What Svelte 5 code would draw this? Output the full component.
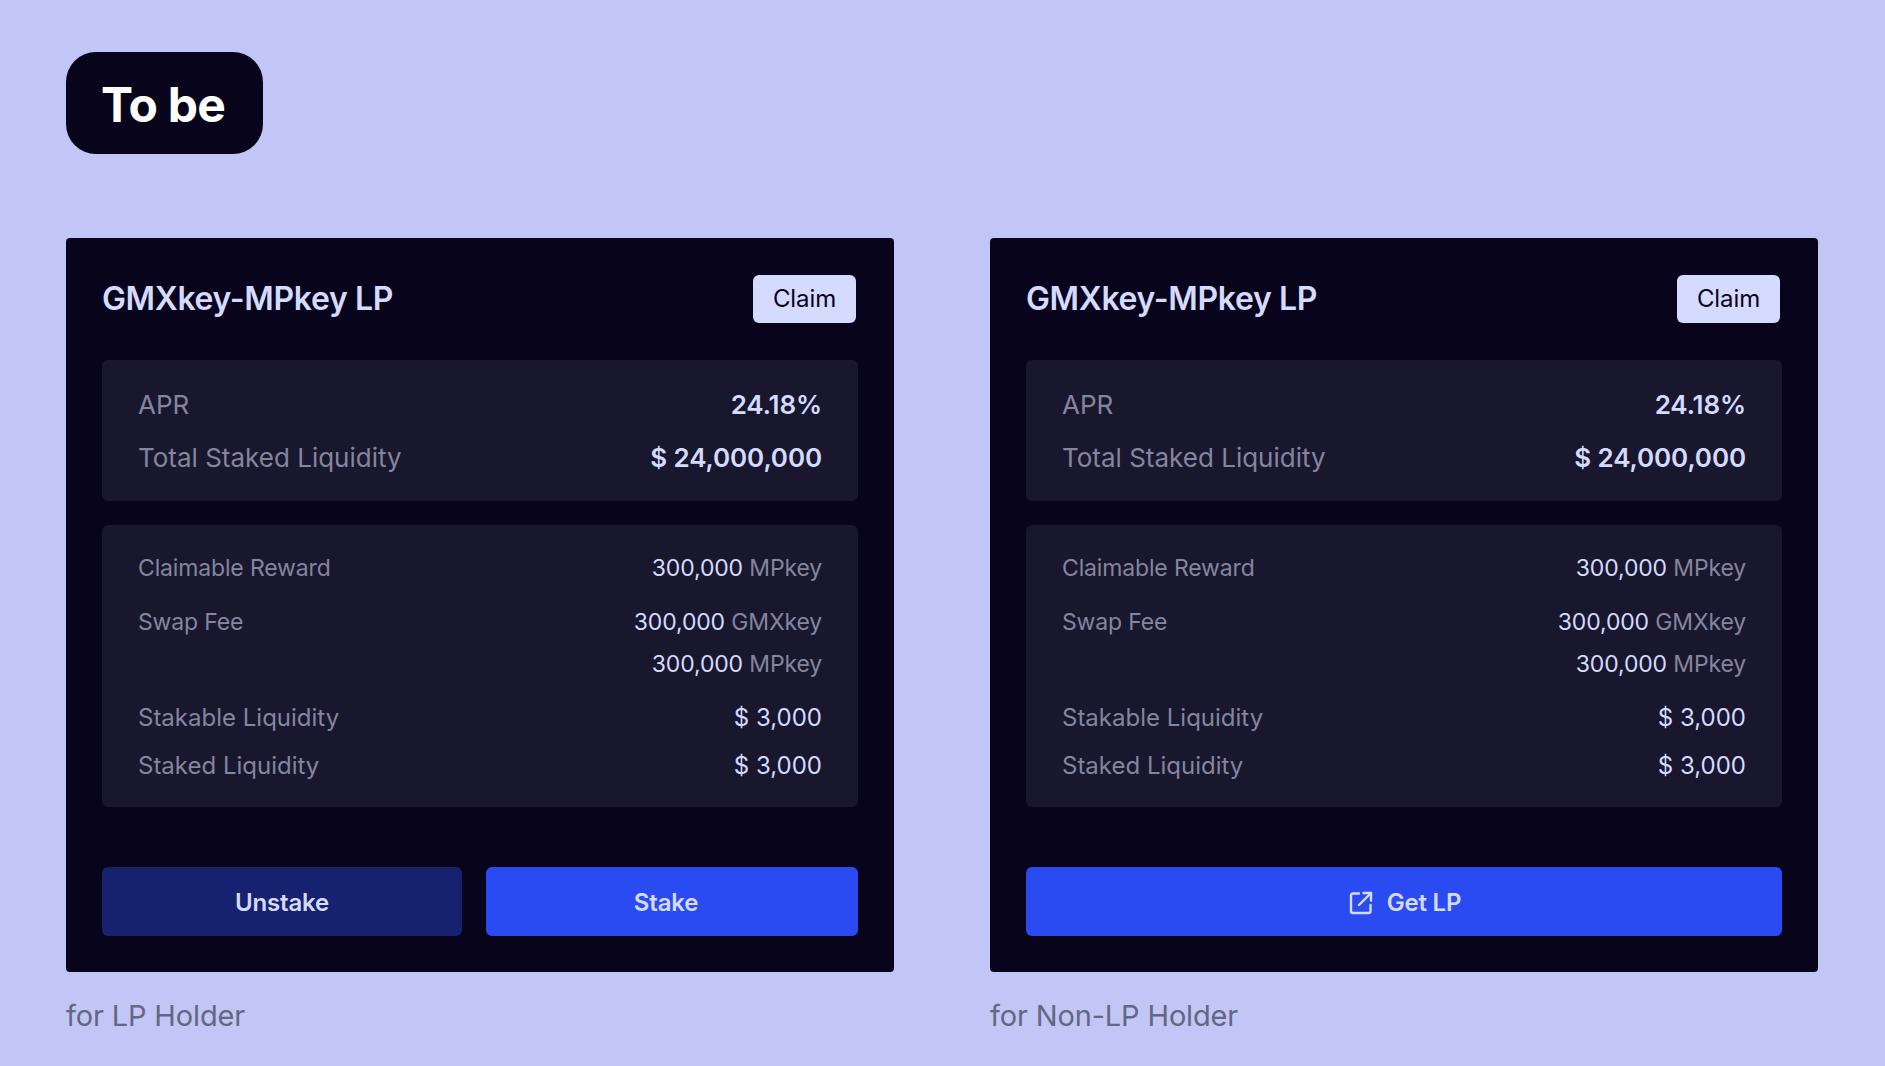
<script>
  const cards = [
    { caption: "for LP Holder", holder: true },
    { caption: "for Non-LP Holder", holder: false },
  ];
</script>

<div class="page">
  <div class="tag">To be</div>

  <div class="cards">
    {#each cards as card}
      <div class="column">
        <div class="card">
          <div class="card-head">
            <h2>GMXkey-MPkey LP</h2>
            <button class="claim">Claim</button>
          </div>

          <div class="box summary">
            <div class="row">
              <span>APR</span>
              <span class="value">24.18%</span>
            </div>
            <div class="row">
              <span>Total Staked Liquidity</span>
              <span class="value">$ 24,000,000</span>
            </div>
          </div>

          <div class="box details">
            <div class="row small">
              <span>Claimable Reward</span>
              <span class="value">300,000 <em>MPkey</em></span>
            </div>
            <div class="row small swap">
              <span>Swap Fee</span>
              <div class="lines">
                <span class="value">300,000 <em>GMXkey</em></span>
                <span class="value">300,000 <em>MPkey</em></span>
              </div>
            </div>
            <div class="row">
              <span>Stakable Liquidity</span>
              <span class="value">$ 3,000</span>
            </div>
            <div class="row">
              <span>Staked Liquidity</span>
              <span class="value">$ 3,000</span>
            </div>
          </div>

          <div class="actions">
            {#if card.holder}
              <button class="action dark">Unstake</button>
              <button class="action stake">Stake</button>
            {:else}
              <button class="action">
                <svg width="28" height="28" viewBox="0 0 28 28" fill="none" stroke="currentColor" stroke-width="2.4" stroke-linecap="round" stroke-linejoin="round">
                  <path d="M12 4.500H6a2 2 0 0 0-2 2V22a2 2 0 0 0 2 2h15.500a2 2 0 0 0 2-2v-6" />
                  <path d="M12 16 24 4" />
                  <path d="M16.500 4H24v7.500" />
                </svg>
                Get LP
              </button>
            {/if}
          </div>
        </div>
        <p class="caption">{card.caption}</p>
      </div>
    {/each}
  </div>
</div>

<style>
  :global(body) {
    margin: 0;
    background: #c2c6f6;
  }

  .page {
    box-sizing: border-box;
    height: 1066px;
    padding: 52px 67px 0 66px;
    font-family: Inter, "Liberation Sans", sans-serif;
    overflow: hidden;
  }

  .tag {
    box-sizing: border-box;
    width: 197px;
    height: 102px;
    padding-left: 35px;
    border-radius: 30px;
    background: #07041c;
    color: #fff;
    font-size: 48px;
    font-weight: 700;
    line-height: 106px;
    letter-spacing: -0.8px;
  }

  .cards {
    display: flex;
    gap: 96px;
    margin-top: 84px;
  }

  .column {
    width: 828px;
  }

  .card {
    box-sizing: border-box;
    height: 734px;
    padding: 36px;
    border-radius: 4px;
    background: #07041c;
  }

  .card-head {
    display: flex;
    justify-content: space-between;
    align-items: center;
    height: 48px;
    margin-bottom: 38px;
  }

  h2 {
    margin: 0;
    color: #d5daff;
    font-size: 32px;
    font-weight: 600;
    letter-spacing: -0.35px;
  }

  .claim {
    width: 103px;
    height: 48px;
    margin-top: 1px;
    margin-right: 2px;
    padding: 0;
    border: none;
    border-radius: 6px;
    background: #d5daff;
    color: #07041c;
    font-family: inherit;
    font-size: 24px;
    letter-spacing: -0.1px;
  }

  .box {
    padding: 0 36px;
    border-radius: 6px;
    background: #18172d;
    color: #85859f;
  }

  .row {
    display: flex;
    justify-content: space-between;
  }

  .value {
    color: #d5daff;
  }

  em {
    font-style: normal;
    color: #85859f;
  }

  .summary {
    height: 141px;
    padding-top: 26px;
    margin-bottom: 24px;
    box-sizing: border-box;
    font-size: 26px;
    line-height: 38px;
  }

  .summary .row + .row {
    margin-top: 15px;
  }

  .summary .value {
    font-weight: 600;
    letter-spacing: -0.1px;
  }

  .details {
    box-sizing: border-box;
    height: 282px;
    padding-top: 25px;
    font-size: 24px;
    line-height: 36px;
  }

  .details .row + .row {
    margin-top: 18px;
  }

  .details .row:last-child {
    margin-top: 12px;
  }

  .details .small {
    font-size: 23px;
    letter-spacing: -0.15px;
  }

  .lines {
    display: flex;
    flex-direction: column;
    align-items: flex-end;
    gap: 6px;
  }

  .actions {
    display: flex;
    gap: 24px;
    margin-top: 60px;
  }

  .action {
    flex: 1;
    display: flex;
    justify-content: center;
    align-items: center;
    gap: 12px;
    height: 69px;
    padding: 2px 0 0;
    border: none;
    border-radius: 6px;
    background: #2b4bf2;
    color: #d5daff;
    font-family: inherit;
    font-size: 24px;
    font-weight: 600;
    letter-spacing: -0.2px;
  }

  .action.dark {
    background: #162170;
  }

  .action.stake {
    padding-right: 12px;
  }

  .caption {
    margin: 26px 0 0;
    color: #63677f;
    font-size: 29px;
    line-height: 36px;
    letter-spacing: -0.15px;
  }
</style>
